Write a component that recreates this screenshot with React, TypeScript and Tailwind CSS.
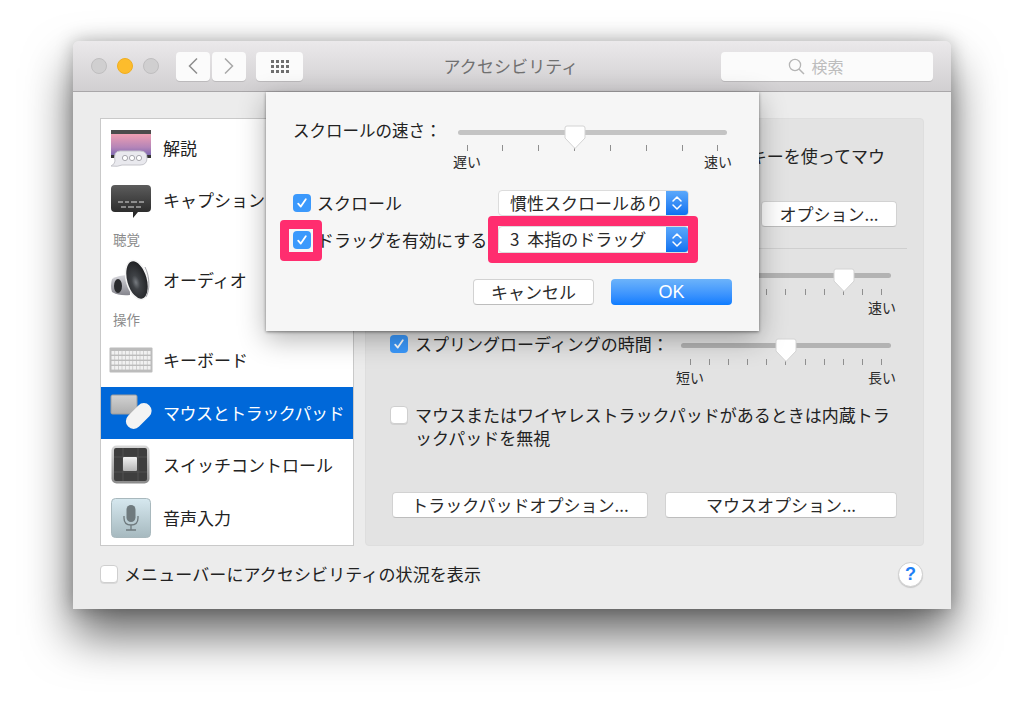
import React from 'react';

const FONT = "font-['Noto_Sans_CJK_JP','Noto_Sans',sans-serif]";

function Check({ checked = false }: { checked?: boolean }) {
  if (!checked) {
    return <span className="block w-[18px] h-[18px] shrink-0 rounded-[4px] bg-white border border-[#cfcfcf] shadow-[0_1px_0_rgba(0,0,0,0.08)]" />;
  }
  return (
    <span className="flex items-center justify-center w-[18px] h-[18px] shrink-0 rounded-[4px] bg-[#3b99fc]">
      <svg width="12" height="12" viewBox="0 0 12 12" fill="none">
        <path d="M2.2 6.6 L4.8 9.6 L9.8 2.2" stroke="#fff" strokeWidth="1.8" strokeLinecap="round" strokeLinejoin="round" />
      </svg>
    </span>
  );
}

function Btn({ label, className }: { label: string; className: string }) {
  return (
    <div className={`flex items-center justify-center h-[26px] pb-px rounded-[4px] bg-white border border-[#d2d2d2] border-b-[#bdbdbd] text-[#2a2a2a] text-[17px] ${className}`}>
      {label}
    </div>
  );
}

function Select({ label, className }: { label: string; className: string }) {
  return (
    <div className={`flex items-stretch w-[191px] rounded-[4px] bg-white border border-[#dcdcdc] text-[#2a2a2a] text-[17px] overflow-hidden ${className}`}>
      <span className="flex-1 flex items-center pl-[11px] pb-px whitespace-nowrap [word-spacing:4px]">{label}</span>
      <span className="flex items-center justify-center w-[22px] bg-gradient-to-b from-[#5aa8fb] to-[#0a72f0]">
        <svg width="12" height="18" viewBox="0 0 12 18" fill="none">
          <path d="M2 7 L6 3 L10 7 M2 11 L6 15 L10 11" stroke="#fff" strokeWidth="1.5" strokeLinecap="round" strokeLinejoin="round" />
        </svg>
      </span>
    </div>
  );
}

function Slider({ width, ticks, index, left, right, trackClass, tight = false }: { width: number; ticks: number; index: number; left?: string; right?: string; trackClass: string; tight?: boolean }) {
  const step = (width - 18) / (ticks - 1);
  return (
    <div className="relative shrink-0" style={{ width }}>
      <div className={`h-[5px] rounded-full ${trackClass}`} />
      <svg className="absolute top-[-5px]" style={{ left: 9 + index * step - 11 }} width="22" height="25" viewBox="0 0 22 25">
        <path d="M3 1 H19 Q21 1 21 3 V13 L11 23.5 L1 13 V3 Q1 1 3 1 Z" fill="#fff" stroke="#d4d4d4" strokeWidth="1" />
      </svg>
      <div className={`flex justify-between px-[8.5px] ${tight ? 'mt-[10px]' : 'mt-[11px]'}`}>
        {Array.from({ length: ticks }).map((_, i) => (
          <span key={i} className="block w-px h-[6px] bg-[#8f8f8f]" />
        ))}
      </div>
      <div className={`flex justify-between text-[14px] leading-[20px] text-[#2a2a2a] -mx-[5px] ${tight ? 'mt-0' : 'mt-[2px]'}`}>
        <span>{left}</span>
        <span>{right}</span>
      </div>
    </div>
  );
}

function IconCommentary() {
  return (
    <svg className="mt-[2px]" width="42" height="38" viewBox="0 0 42 38">
      <defs>
        <linearGradient id="sky" x1="0" y1="0" x2="0" y2="1">
          <stop offset="0" stopColor="#ef9fb2" />
          <stop offset="0.55" stopColor="#b585b8" />
          <stop offset="1" stopColor="#6a5fae" />
        </linearGradient>
      </defs>
      <rect x="1" y="0" width="40" height="4" fill="#4b4b4b" />
      <rect x="1" y="4" width="40" height="24" fill="url(#sky)" />
      <rect x="1" y="25" width="40" height="3" fill="#333" />
      <path d="M10 21 H30 Q37 21 37 28 Q37 35 30 35 H12 Q8 37 1 36 Q5 34 5 31 Q3 21 10 21 Z" fill="#e9e9ee" stroke="#c5c5cb" />
      <circle cx="15" cy="28" r="2.6" fill="#fff" stroke="#a8a8ae" />
      <circle cx="22" cy="28" r="2.6" fill="#fff" stroke="#a8a8ae" />
      <circle cx="29" cy="28" r="2.6" fill="#fff" stroke="#a8a8ae" />
    </svg>
  );
}

function IconCaption() {
  return (
    <svg className="mt-[3px]" width="42" height="34" viewBox="0 0 42 34">
      <defs>
        <linearGradient id="cap" x1="0" y1="0" x2="0" y2="1">
          <stop offset="0" stopColor="#5c5c5c" />
          <stop offset="1" stopColor="#222" />
        </linearGradient>
      </defs>
      <path d="M5 0 H37 Q41 0 41 4 V23 Q41 27 37 27 H28 L23 33 V27 H5 Q1 27 1 23 V4 Q1 0 5 0 Z" fill="url(#cap)" />
      <path d="M8 17 H13 M15 17 H19 M21 17 H27 M29 17 H34 M11 22 H16 M18 22 H24 M26 22 H31" stroke="#ddd" strokeWidth="1" />
    </svg>
  );
}

function IconAudio() {
  return (
    <svg width="42" height="42" viewBox="0 0 42 42">
      <defs>
        <linearGradient id="spk" x1="0" y1="0" x2="0" y2="1">
          <stop offset="0" stopColor="#d8d8dd" />
          <stop offset="1" stopColor="#85858d" />
        </linearGradient>
        <radialGradient id="cone" cx="0.42" cy="0.55" r="0.6">
          <stop offset="0" stopColor="#777b80" />
          <stop offset="0.3" stopColor="#3f4246" />
          <stop offset="1" stopColor="#1c1d20" />
        </radialGradient>
      </defs>
      <path d="M2 20 Q0 27 2 33 Q9 37 20 36 L20 16 Q8 16 2 20 Z" fill="url(#spk)" />
      <ellipse cx="8" cy="27" rx="4" ry="7" fill="#2a2b2e" />
      <ellipse cx="27" cy="21" rx="10.5" ry="20" transform="rotate(-16 27 21)" fill="url(#cone)" stroke="#f4f4f4" strokeWidth="1.6" />
      <path d="M35 8 C40 18 40 31 36 38" stroke="#a9a9ae" strokeWidth="1" fill="none" />
    </svg>
  );
}

function IconKeyboard() {
  const rows = [0, 1, 2, 3];
  return (
    <svg width="44" height="26" viewBox="0 0 44 26">
      <rect x="0.5" y="0.5" width="43" height="25" rx="1" fill="#bcbcbc" />
      {rows.map((r) =>
        Array.from({ length: 11 }).map((_, c) => (
          <rect key={`${r}-${c}`} x={2.5 + c * 3.6} y={4 + r * 5} width="3" height="3.6" fill="#f1f1f1" />
        ))
      )}
    </svg>
  );
}

function IconMouse() {
  return (
    <svg width="42" height="38" viewBox="0 0 42 38">
      <defs>
        <linearGradient id="pad" x1="0" y1="0" x2="0" y2="1">
          <stop offset="0" stopColor="#d2d2d2" />
          <stop offset="1" stopColor="#aeaeae" />
        </linearGradient>
      </defs>
      <rect x="1" y="1" width="26" height="19" rx="1.5" fill="url(#pad)" stroke="#9c9c9c" />
      <rect x="21" y="7" width="15.5" height="30" rx="7.75" fill="#f3f3f3" transform="rotate(45 28.75 22)" />
    </svg>
  );
}

function IconSwitch() {
  return (
    <svg width="40" height="40" viewBox="0 0 40 40">
      <defs>
        <linearGradient id="swb" x1="0" y1="0" x2="0" y2="1">
          <stop offset="0" stopColor="#d8d8d8" />
          <stop offset="1" stopColor="#8a8a8a" />
        </linearGradient>
        <linearGradient id="swk" x1="0" y1="0" x2="0" y2="1">
          <stop offset="0" stopColor="#f2f2f2" />
          <stop offset="1" stopColor="#b5b5b5" />
        </linearGradient>
      </defs>
      <rect x="0.5" y="0.5" width="38" height="38" rx="5" fill="url(#swb)" />
      <rect x="3" y="3" width="33" height="33" rx="2" fill="#3e3e3e" />
      <path d="M3 12 H36 M3 27 H36 M12 3 V36 M27 3 V36" stroke="#555" strokeWidth="0.8" />
      <rect x="12" y="12" width="14" height="14" rx="1" fill="url(#swk)" />
    </svg>
  );
}

function IconVoice() {
  return (
    <svg width="40" height="40" viewBox="0 0 40 40">
      <defs>
        <linearGradient id="vbg" x1="0" y1="0" x2="0" y2="1">
          <stop offset="0" stopColor="#d6e8ef" />
          <stop offset="1" stopColor="#a6b9bf" />
        </linearGradient>
      </defs>
      <rect x="0.5" y="0.5" width="39" height="39" rx="4" fill="url(#vbg)" stroke="#a8b8bd" />
      <rect x="15.5" y="7" width="9" height="17" rx="4.5" fill="#6f7a7e" />
      <path d="M13 18 V20 Q13 27 20 27 Q27 27 27 20 V18 M20 27 V32 M15 32 H25" stroke="#6f7a7e" strokeWidth="1.3" fill="none" />
    </svg>
  );
}

function Row({ icon, label, active = false, className = '' }: { icon: React.ReactNode; label: string; active?: boolean; className?: string }) {
  return (
    <div className={`flex items-center h-[52px] ${active ? 'bg-[#0068d9] text-white' : 'text-[#222]'} ${className}`}>
      <div className="flex items-center justify-center w-[62px] pr-[2px] shrink-0">{icon}</div>
      <span className="text-[17px] whitespace-nowrap">{label}</span>
    </div>
  );
}

function GroupLabel({ label, className = '' }: { label: string; className?: string }) {
  return <div className={`h-[28px] flex items-center pl-[12px] text-[13.5px] text-[#8b8b8b] ${className}`}><span className="-mt-[2px]">{label}</span></div>;
}

export default function App() {
  return (
    <div className={`w-[1024px] h-[714px] bg-white pl-[73px] pt-[41px] overflow-hidden ${FONT}`}>
      <div className="relative w-[878px] h-[568px] bg-[#ececec] rounded-t-[6px] shadow-[0_26px_48px_rgba(0,0,0,0.6),0_0_18px_rgba(0,0,0,0.25)] flex flex-col">
        {/* toolbar */}
        <div className="relative h-[51px] shrink-0 flex items-center pl-[18px] pr-[18px] rounded-t-[6px] bg-gradient-to-b from-[#ebe9eb] to-[#d1cfd1] border-b border-[#a9a7a9]">
          <span className="w-[16px] h-[16px] rounded-full bg-[#d0cfd0] border border-[#bfbebf]" />
          <span className="w-[16px] h-[16px] rounded-full bg-[#fdbc2c] border border-[#f0ae20] ml-[10px]" />
          <span className="w-[16px] h-[16px] rounded-full bg-[#d0cfd0] border border-[#bfbebf] ml-[10px]" />
          <div className="flex items-center justify-center w-[34px] h-[29px] ml-[17px] rounded-[4px] bg-[#fbfbfb] shadow-[0_1px_0_rgba(0,0,0,0.12)]">
            <svg width="12" height="18" viewBox="0 0 12 18" fill="none"><path d="M10 1.5 L2.5 9 L10 16.5" stroke="#8d8d8d" strokeWidth="1.5" /></svg>
          </div>
          <div className="flex items-center justify-center w-[34px] h-[29px] ml-[2px] rounded-[4px] bg-[#fbfbfb] shadow-[0_1px_0_rgba(0,0,0,0.12)]">
            <svg width="12" height="18" viewBox="0 0 12 18" fill="none"><path d="M2 1.5 L9.5 9 L2 16.5" stroke="#a8a8a8" strokeWidth="1.5" /></svg>
          </div>
          <div className="flex items-center justify-center w-[47px] h-[29px] ml-[10px] rounded-[4px] bg-[#fbfbfb] shadow-[0_1px_0_rgba(0,0,0,0.12)]">
            <div className="grid grid-cols-4 gap-x-[2px] gap-y-[2px]">
              {Array.from({ length: 12 }).map((_, i) => (
                <span key={i} className="block w-[3px] h-[3px] bg-[#6f6f6f]" />
              ))}
            </div>
          </div>
          <div className="flex-1 text-center text-[17px] text-[#707070] pr-[2px] tracking-[0.1px]">アクセシビリティ</div>
          <div className="flex items-center justify-center gap-[6px] w-[212px] h-[29px] pr-[22px] rounded-[4px] bg-[#fbfbfb] shadow-[0_1px_0_rgba(0,0,0,0.12)] text-[16px] text-[#bdbdbd]">
            <svg width="17" height="17" viewBox="0 0 17 17" fill="none">
              <circle cx="7" cy="7" r="5.6" stroke="#b5b5b5" strokeWidth="1.3" />
              <path d="M11 11 L16 16" stroke="#b5b5b5" strokeWidth="1.5" />
            </svg>
            <span>検索</span>
          </div>
        </div>

        {/* body */}
        <div className="flex-1 px-[27px] pt-[26px]">
          <div className="flex gap-[11px] h-[428px]">
            <div className="w-[254px] shrink-0 bg-white border border-[#c9c9c9] pt-[3px] overflow-hidden">
              <Row icon={<IconCommentary />} label="解説" />
              <Row icon={<IconCaption />} label="キャプション" />
              <GroupLabel label="聴覚" />
              <Row icon={<IconAudio />} label="オーディオ" />
              <GroupLabel label="操作" />
              <Row icon={<IconKeyboard />} label="キーボード" />
              <Row icon={<IconMouse />} label="マウスとトラックパッド" active className="mt-px tracking-[-0.45px]" />
              <Row icon={<IconSwitch />} label="スイッチコントロール" />
              <Row icon={<IconVoice />} label="音声入力" className="mt-px" />
            </div>

            <div className="w-[559px] rounded-[4px] bg-[#e3e3e3] border border-[#dedede] pl-[24px] pr-[26px] pt-[25px] text-[#222] text-[17px]">
              <div className="h-[24px] flex items-center justify-end pr-[12px] whitespace-nowrap">キーを使ってマウ</div>
              <div className="flex justify-end mt-[33px]">
                <Btn label="オプション..." className="w-[136px]" />
              </div>
              <div className="h-px bg-[#cfcfcf] mt-[21px] -mr-[10px]" />
              <div className="flex justify-end mt-[24px] mr-[6px]">
                <Slider width={210} ticks={11} index={8} right="速い" trackClass="bg-[#b3b3b3]" />
              </div>
              <div className="flex items-start justify-between mt-[18px] mr-[6px]">
                <label className="flex items-center gap-[7px] h-[18px] whitespace-nowrap">
                  <Check checked />
                  スプリングローディングの時間：
                </label>
                <div className="pt-[8px]">
                  <Slider width={210} ticks={11} index={5} left="短い" right="長い" trackClass="bg-[#b3b3b3]" />
                </div>
              </div>
              <div className="flex items-start gap-[7px] mt-[16px]">
                <div className="pt-[3px]"><Check /></div>
                <div className="leading-[23px] whitespace-nowrap">
                  マウスまたはワイヤレストラックパッドがあるときは内蔵トラ
                  <br />
                  ックパッドを無視
                </div>
              </div>
              <div className="flex justify-between ml-[2px] mt-[43px]">
                <Btn label="トラックパッドオプション..." className="w-[256px]" />
                <Btn label="マウスオプション..." className="w-[232px]" />
              </div>
            </div>
          </div>

          <div className="flex items-center h-[26px] mt-[15px] text-[#222] text-[17px]">
            <Check />
            <span className="ml-[6px] whitespace-nowrap tracking-[0.1px]">メニューバーにアクセシビリティの状況を表示</span>
            <div className="ml-auto -translate-x-px flex items-center justify-center w-[25px] h-[25px] rounded-full bg-white border border-[#d0d0d0] shadow-[0_1px_1px_rgba(0,0,0,0.15)] text-[#1f80f5] text-[18px] font-bold font-['Liberation_Sans',sans-serif]">?</div>
          </div>
        </div>

        {/* sheet over the window */}
        <div className="absolute left-[193px] top-[51px] z-10 w-[493px] h-[239px] bg-[#f6f6f6] shadow-[0_1px_3px_rgba(0,0,0,0.45),0_8px_26px_rgba(0,0,0,0.3)] text-[#222] text-[17px] pl-[27px] pt-[26px]">
          <div className="flex items-start">
            <div className="w-[165px] text-[16.5px] leading-[24px] whitespace-nowrap">スクロールの速さ：</div>
            <div className="pt-[12px]">
              <Slider width={269} ticks={8} index={3} left="遅い" right="速い" trackClass="bg-[#c4c4c4]" tight />
            </div>
          </div>
          <div className="flex items-center h-[26px] mt-[19px]">
            <Check checked />
            <span className="ml-[6px] pb-px">スクロール</span>
            <Select label="慣性スクロールあり" className="h-[26px] ml-auto mr-[70px]" />
          </div>
          <div className="flex items-center h-[27px] mt-[10px]">
            <Check checked />
            <span className="ml-[6px]">ドラッグを有効にする</span>
            <Select label="3 本指のドラッグ" className="h-[27px] ml-auto mr-[70px]" />
          </div>
          <div className="flex gap-[17px] mt-[26px] ml-[180px]">
            <Btn label="キャンセル" className="w-[121px]" />
            <div className="flex items-center justify-center w-[121px] h-[26px] rounded-[4px] bg-gradient-to-b from-[#6cb3fa] to-[#0a7cff] text-white text-[18px] font-['Liberation_Sans',sans-serif]">OK</div>
          </div>

          {/* pink annotations */}
          <div className="absolute left-[14px] top-[128px] w-[42px] h-[41px] rounded-[4px] border-[9px] border-[#ff2d6f]" />
          <div className="absolute left-[222px] top-[124px] w-[210px] h-[47px] rounded-[4px] border-[10px] border-[#ff2d6f]" />
        </div>
      </div>
    </div>
  );
}
